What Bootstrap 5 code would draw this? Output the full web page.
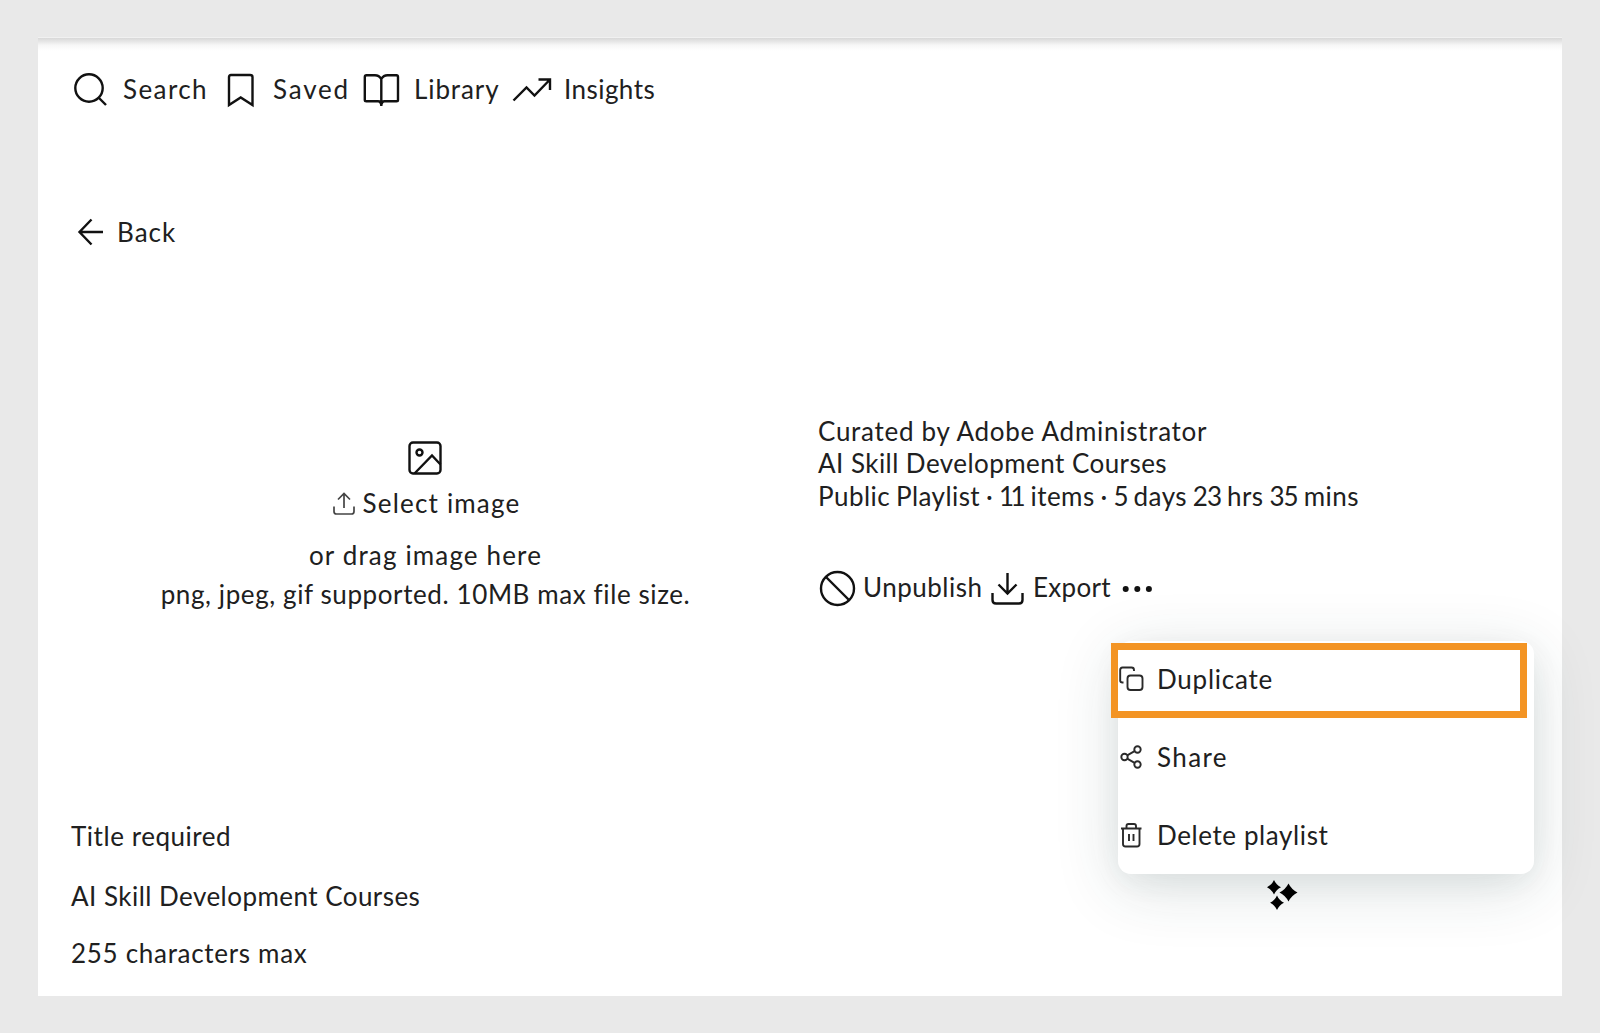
<!DOCTYPE html>
<html lang="en">
<head>
<meta charset="utf-8">
<meta name="viewport" content="width=device-width, initial-scale=1">
<title>Playlist editor</title>
<link href="https://cdn.jsdelivr.net/npm/bootstrap@5.3.0/dist/css/bootstrap.min.css" rel="stylesheet">
<style>
body{background:#e9e9e9;font-family:Lato,"Noto Sans",sans-serif;font-size:26px;line-height:32px;color:#202020;padding:38px 38px 0;height:1033px;overflow:hidden}
.panel{background:linear-gradient(#d9d9d9 0,#e4e4e4 3px,#f6f6f6 7px,#fff 13px);height:958px;padding-top:35px;box-shadow:0 -1px #f1f1f1}
svg{display:block;flex:none;fill:none;stroke:#111;stroke-width:2.4;overflow:visible}
.txt{white-space:nowrap;flex:none;font-variant-ligatures:none}
.topnav{height:32px;margin-left:36px}
.topnav svg{position:relative;top:1px}
.backrow{margin:111px 0 0 40px;height:32px}
.mainrow{margin-top:167px;height:332px}
.uploader{width:774px;padding-top:26px}
.details{padding:0 0 0 6px}
.details p{height:32.4px;margin:0}
.actions{margin-top:59px;height:32px}
.fields{margin:73px 0 0 33px}
.tight-num{letter-spacing:-.9px}
.tight-ones{letter-spacing:-3.6px;margin-right:2.6px}
.playmenu{position:absolute;left:1118px;top:641px;width:416px;height:233px;background:#fff;border-radius:13px;box-shadow:0 13px 64px rgba(30,65,65,.16),0 8px 28px rgba(30,65,65,.06)}
.playmenu .entry{height:78px;padding-bottom:3px}
.playmenu svg{stroke-width:1.9;stroke:#2a2a2a}
.frame-mark{position:absolute;left:1111px;top:643px;width:416px;height:75px;border:7px solid #f39424}
.sparkle{position:absolute;left:1267px;top:880px}
.sparkle svg{fill:#000;stroke:none}
</style>
<script src="https://cdn.jsdelivr.net/npm/bootstrap@5.3.0/dist/js/bootstrap.bundle.min.js"></script>
</head>
<body>
<main class="panel">
  <nav class="topnav d-flex align-items-center">
    <svg width="34" height="34" viewBox="0 0 34 34"><circle cx="15" cy="15" r="13.7"/><path d="M24.5 24.5l7.5 7.5"/></svg>
    <span class="txt" style="margin-left:15px;width:91px;letter-spacing:1.4px">Search</span>
    <svg style="margin-left:13px" width="28" height="34" viewBox="0 0 28 34"><path d="M2 32V4Q2 2 4 2H23Q25.5 2 25.5 4V32L13.7 24.5Z"/></svg>
    <span class="txt" style="margin-left:18px;width:78px;letter-spacing:1.8px">Saved</span>
    <svg style="margin-left:12px" width="37" height="34" viewBox="0 0 37 34"><path d="M18.3 6Q16 2.3 12 2.3H3.5Q1.8 2.3 1.8 4V27Q1.8 28.3 3.3 28.3H15Q18.3 28.3 18.3 33Q18.3 28.3 21.6 28.3H33.5Q35 28.3 35 27V4Q35 2.3 33.4 2.3H24.5Q20.5 2.3 18.3 6V32"/></svg>
    <span class="txt" style="margin-left:14px;width:88px;letter-spacing:.9px">Library</span>
    <svg style="margin-left:10px" width="40" height="26" viewBox="0 0 40 26"><path d="M1.5 23.5L14.5 10.5L22.5 18.5L37.5 3M26.5 2.5H38V13"/></svg>
    <span class="txt" style="margin-left:12px;letter-spacing:.45px">Insights</span>
  </nav>
  <div class="backrow d-flex align-items-center">
    <svg width="26" height="28" viewBox="0 0 26 28"><path d="M25 14H1.5M13.5 1.5L1.5 14L13.5 26.5"/></svg>
    <span class="txt" style="margin-left:13px;letter-spacing:1.05px">Back</span>
  </div>
  <section class="mainrow d-flex">
    <div class="uploader d-flex flex-column align-items-center">
      <svg width="34" height="34" viewBox="0 0 34 34"><rect x="1.5" y="1.5" width="31" height="31" rx="3.5"/><circle cx="11.5" cy="11.5" r="3"/><path d="M6.5 32.5L24 14.5L32.5 23.5"/></svg>
      <div class="d-flex align-items-center" style="margin:12px 0 0 3px;height:32px">
        <svg width="22" height="24" viewBox="0 0 22 24" style="stroke-width:1.7;stroke:#444"><path d="M1 15.5V20.500Q1 23 3.5 23H18.5Q21 23 21 20.500V15.500M11 17V3M5 8.500L11 2.500L17 8.500"/></svg>
        <span class="txt" style="margin-left:8px;letter-spacing:1.18px">Select image</span>
      </div>
      <span class="txt" style="margin-top:20px;margin-left:1px;letter-spacing:1.15px">or drag image here</span>
      <span class="txt" style="margin-top:7px;margin-left:1px;letter-spacing:.6px">png, jpeg, gif supported. 10MB max file size.</span>
    </div>
    <div class="details">
      <p class="txt" style="letter-spacing:.72px">Curated by Adobe Administrator</p>
      <p class="txt" style="letter-spacing:.45px">AI Skill Development Courses</p>
      <p class="txt" style="letter-spacing:.45px;word-spacing:-1.25px">Public Playlist · <span class="tight-ones">11</span> items · <span class="tight-num">5</span> days <span class="tight-num">23</span> hrs <span class="tight-num">35</span> mins</p>
      <div class="actions d-flex align-items-center">
        <svg width="37" height="37" viewBox="0 0 37 37" style="margin-left:1px;margin-top:2px"><circle cx="18.5" cy="18.5" r="16.5"/><path d="M7 7L30 30"/></svg>
        <span class="txt" style="margin-left:7px;width:119px;letter-spacing:.5px">Unpublish</span>
        <svg width="33" height="34" viewBox="0 0 33 34" style="margin-left:9px;margin-top:3px"><path d="M1.5 21V28Q1.5 31.5 5 31.5H28Q31.5 31.5 31.5 28V21M16.5 1V21.5M7.5 12.5L16.5 21.5L25.5 12.5"/></svg>
        <span class="txt" style="margin-left:9px;width:78px;letter-spacing:.3px">Export</span>
        <svg width="31" height="8" viewBox="0 0 31 8" style="margin-left:11px;margin-top:3px;fill:#111;stroke:none"><circle cx="3.7" cy="4" r="3"/><circle cx="15.3" cy="4" r="3"/><circle cx="26.9" cy="4" r="3"/></svg>
      </div>
    </div>
  </section>
  <section class="fields d-flex flex-column">
    <label class="txt" style="letter-spacing:.55px">Title required</label>
    <span class="txt" style="margin-top:28px;letter-spacing:.46px">AI Skill Development Courses</span>
    <span class="txt" style="margin-top:25px;letter-spacing:.7px">255 characters max</span>
  </section>
</main>
<div class="playmenu">
  <div class="entry d-flex align-items-center">
    <svg width="26" height="26" viewBox="0 0 26 26"><path d="M5.500 16.5H4.500Q2.200 16.5 2.200 14.5V4Q2.200 1.500 4.500 1.500H13.500Q16 1.500 16 4V5"/><rect x="9.500" y="9.5" width="15" height="14.500" rx="3"/></svg>
    <span class="txt" style="margin-left:13px;letter-spacing:.76px">Duplicate</span>
  </div>
  <div class="entry d-flex align-items-center">
    <svg width="26" height="26" viewBox="0 0 26 26"><circle cx="6.500" cy="13" r="3.200"/><circle cx="19.5" cy="5.5" r="3.200"/><circle cx="19.5" cy="20.5" r="3.200"/><path d="M9.200 11.300L16.600 7.200M9.200 14.700L16.600 18.800"/></svg>
    <span class="txt" style="margin-left:13px;letter-spacing:1.4px">Share</span>
  </div>
  <div class="entry d-flex align-items-center">
    <svg width="26" height="26" viewBox="0 0 26 26"><path d="M3 6.5H23.5M5 6.5V22Q5 24.5 7.5 24.5H19Q21.5 24.5 21.5 22V6.5M8.5 6V4Q8.5 2 10.5 2H16Q18 2 18 4V6M11 12V19M15.5 12V19"/></svg>
    <span class="txt" style="margin-left:13px;letter-spacing:.6px">Delete playlist</span>
  </div>
</div>
<div class="frame-mark"></div>
<div class="sparkle"><svg width="31" height="30" viewBox="0 0 31 30"><path d="M7 0Q9.200 5 14 7.300Q9.200 9.600 7 14.600Q4.800 9.600 0 7.300Q4.800 5 7 0ZM21.500 3.500Q24.500 9.500 30.500 12.500Q24.500 15.500 21.500 21.500Q18.500 15.500 12.500 12.500Q18.500 9.500 21.500 3.500ZM10 15.500Q12.200 20.500 17 22.800Q12.200 25.100 10 30Q7.800 25.100 3 22.800Q7.800 20.500 10 15.500Z"/></svg></div>
</body>
</html>
